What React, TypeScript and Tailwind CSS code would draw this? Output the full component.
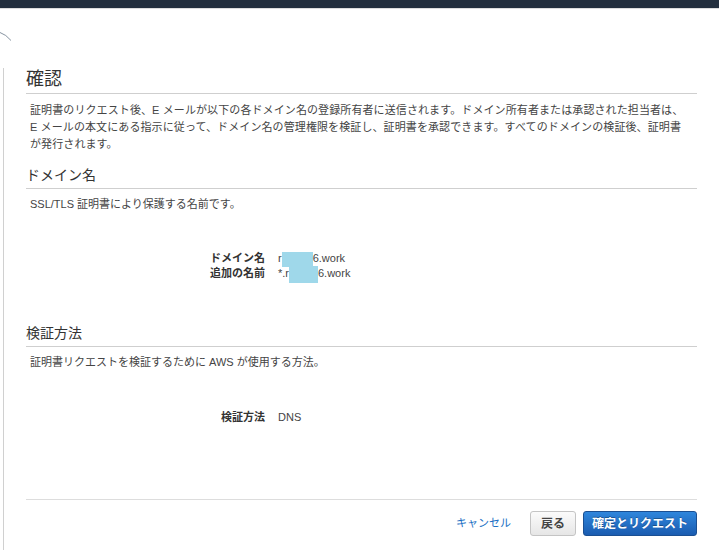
import React from "react";

/**
 * 証明書リクエストの確認画面
 */

const FONT = "font-['Liberation_Sans','Noto_Sans_CJK_JP',sans-serif]";

function SectionHeading({ children }: { children: React.ReactNode }) {
  return (
    <h3 className="border-b border-[#cfcfcf] pb-[3px] text-[14px] leading-[20px] font-normal text-[#333]">
      {children}
    </h3>
  );
}

function Redacted({ w, h }: { w: string; h: string }) {
  return <span className={`inline-block align-middle -my-[2px] bg-[#9fd8ea] ${w} ${h}`} />;
}

function Row({ label, children }: { label: string; children: React.ReactNode }) {
  return (
    <div className="flex h-[15px]">
      <span className="w-[239px] text-right font-bold text-[#333]">{label}</span>
      <span className="ml-[13px] text-[#444]">{children}</span>
    </div>
  );
}

export default function App() {
  return (
    <div className={`min-h-screen bg-white ${FONT} text-[11px] text-[#444]`}>
      {/* 上部のナビゲーションバー */}
      <div className="h-2 bg-[#232f3e]" />
      <div className="h-px bg-[#dddddd]" />

      <div className="h-[59px]">
        <svg width="14" height="45" viewBox="0 0 14 45" className="block">
          <path d="M0 23.5 Q6 25.5 11 31.5" fill="none" stroke="#8794a1" strokeWidth="1" />
        </svg>
      </div>

      <div className="ml-[3px] border-l border-[#d0d0d0] pl-[22px] pr-[22px] pb-[15px]">
        {/* 確認 */}
        <h2 className="border-b border-[#cfcfcf] pb-[3px] text-[18px] leading-[22px] font-normal text-[#333]">
          確認
        </h2>
        <p className="mt-[8px] pl-1 leading-[17px] tracking-[0.1px]">
          証明書のリクエスト後、E メールが以下の各ドメイン名の登録所有者に送信されます。ドメイン所有者または承認された担当者は、
          <br />
          E メールの本文にある指示に従って、ドメイン名の管理権限を検証し、証明書を承認できます。すべてのドメインの検証後、証明書
          <br />
          が発行されます。
        </p>

        {/* ドメイン名 */}
        <div className="mt-[12px]">
          <SectionHeading>ドメイン名</SectionHeading>
          <p className="mt-[7px] pl-1 leading-[17px]">SSL/TLS 証明書により保護する名前です。</p>
          <div className="mt-[38px] leading-[15px]">
            <Row label="ドメイン名">
              r<Redacted w="w-[31px]" h="h-[15px]" />
              6.work
            </Row>
            <Row label="追加の名前">
              *.r<Redacted w="w-[29px]" h="h-[17px]" />
              6.work
            </Row>
          </div>
        </div>

        {/* 検証方法 */}
        <div className="mt-[42px]">
          <SectionHeading>検証方法</SectionHeading>
          <p className="mt-[7px] pl-1 leading-[17px]">
            証明書リクエストを検証するために AWS が使用する方法。
          </p>
          <div className="mt-[39px] leading-[15px]">
            <Row label="検証方法">DNS</Row>
          </div>
        </div>

        {/* フッター */}
        <div className="mt-[74px] flex items-center justify-end border-t border-[#dddddd] pt-[11px]">
          <a className="mr-[19px] text-[11px] text-[#1a6fc4] cursor-pointer">キャンセル</a>
          <button className="h-[25px] w-[46px] rounded-[3px] border border-[#c4c4c4] bg-gradient-to-b from-[#fbfbfb] to-[#e6e6e6] text-[12px] font-bold text-[#444]">
            戻る
          </button>
          <button className="ml-[7px] h-[25px] w-[114px] rounded-[3px] border border-[#1a4f92] bg-gradient-to-b from-[#2f86dc] to-[#1a5cb0] text-[12px] font-bold text-white [text-shadow:0_-1px_0_rgba(0,0,0,0.3)]">
            確定とリクエスト
          </button>
        </div>
      </div>
    </div>
  );
}
